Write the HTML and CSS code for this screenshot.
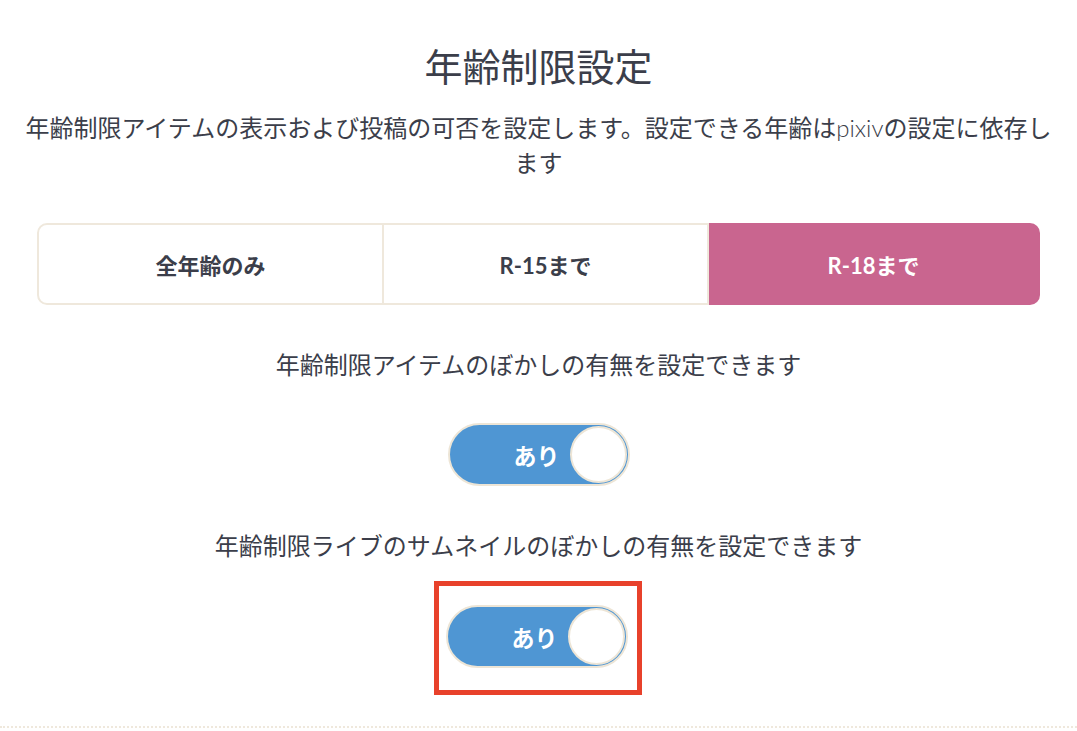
FILE: index.html
```html
<!DOCTYPE html>
<html lang="ja">
<head>
<meta charset="utf-8">
<title>年齢制限設定</title>
<link rel="stylesheet" href="styles.css">
</head>
<body>
<section class="settings">
  <h1 class="title">年齢制限設定</h1>
  <p class="desc">年齢制限アイテムの表示および投稿の可否を設定します。設定できる年齢は<span class="latin">pixiv</span>の設定に依存します</p>
  <div class="segments">
    <div class="seg seg-all">全年齢のみ</div>
    <div class="seg seg-15">R-15まで</div>
    <div class="seg seg-18 active">R-18まで</div>
  </div>
  <p class="label">年齢制限アイテムのぼかしの有無を設定できます</p>
  <div class="toggle-row">
    <div class="toggle"><span class="toggle-text">あり</span><span class="knob"></span></div>
  </div>
  <p class="label label-2">年齢制限ライブのサムネイルのぼかしの有無を設定できます</p>
  <div class="toggle-row">
    <div class="highlight">
      <div class="toggle"><span class="toggle-text">あり</span><span class="knob"></span></div>
    </div>
  </div>
  <div class="divider"></div>
</section>
</body>
</html>
```

FILE: styles.css
```css
html, body {
  margin: 0;
  padding: 0;
  background: #ffffff;
}
body {
  font-family: Lato, "Noto Sans CJK JP", sans-serif;
  color: #3b3e4a;
}
.settings {
  display: flex;
  flex-direction: column;
  align-items: stretch;
  padding: 40px 0 0;
}
.title {
  margin: 0;
  font-size: 38px;
  font-weight: 400;
  line-height: 53px;
  text-align: center;
}
.desc {
  margin: 17px 16px 0;
  font-size: 24px;
  line-height: 35px;
  font-weight: 400;
  text-align: center;
}
.latin {
  font-weight: 300;
}
.segments {
  display: flex;
  margin: 43px 37px 0;
  height: 82px;
}
.seg {
  flex: 1 1 auto;
  display: flex;
  align-items: center;
  justify-content: center;
  font-size: 22px;
  font-weight: 700;
  color: #3b3e4a;
  border-top: 2px solid #efe8dc;
  border-bottom: 2px solid #efe8dc;
  border-right: 2px solid #efe8dc;
  box-sizing: border-box;
}
.seg-all {
  border-left: 2px solid #efe8dc;
  border-radius: 10px 0 0 10px;
  width: 347px;
}
.seg-15 { width: 325px; }
.seg-18 { width: 331px; }
.seg.active {
  background: #c9658f;
  border-color: #c9658f;
  color: #ffffff;
  border-radius: 0 10px 10px 0;
}
.label {
  margin: 42px 0 0;
  font-size: 24px;
  line-height: 35px;
  text-align: center;
}
.label-2 { margin-top: 42px; }
.toggle-row {
  display: flex;
  justify-content: center;
  margin-top: 41px;
}
.label-2 + .toggle-row { margin-top: 18px; }
.toggle {
  width: 182px;
  height: 63px;
  box-sizing: border-box;
  border: 2px solid #ede5d6;
  border-radius: 32px;
  background: #4f96d3;
  display: flex;
  align-items: center;
  justify-content: flex-end;
  padding-right: 1px;
  gap: 10px;
}
.toggle-text {
  color: #ffffff;
  font-size: 23px;
  font-weight: 700;
}
.knob {
  width: 57px;
  height: 57px;
  box-sizing: border-box;
  border-radius: 50%;
  background: #ffffff;
  border: 2px solid #ede5d6;
}
.highlight {
  border: 5px solid #e8412b;
  padding: 19px 9px 22px 7px;
  margin-left: -2px;
}
.divider {
  margin-top: 31px;
  border-top: 2px dotted #efe8dc;
}
```
